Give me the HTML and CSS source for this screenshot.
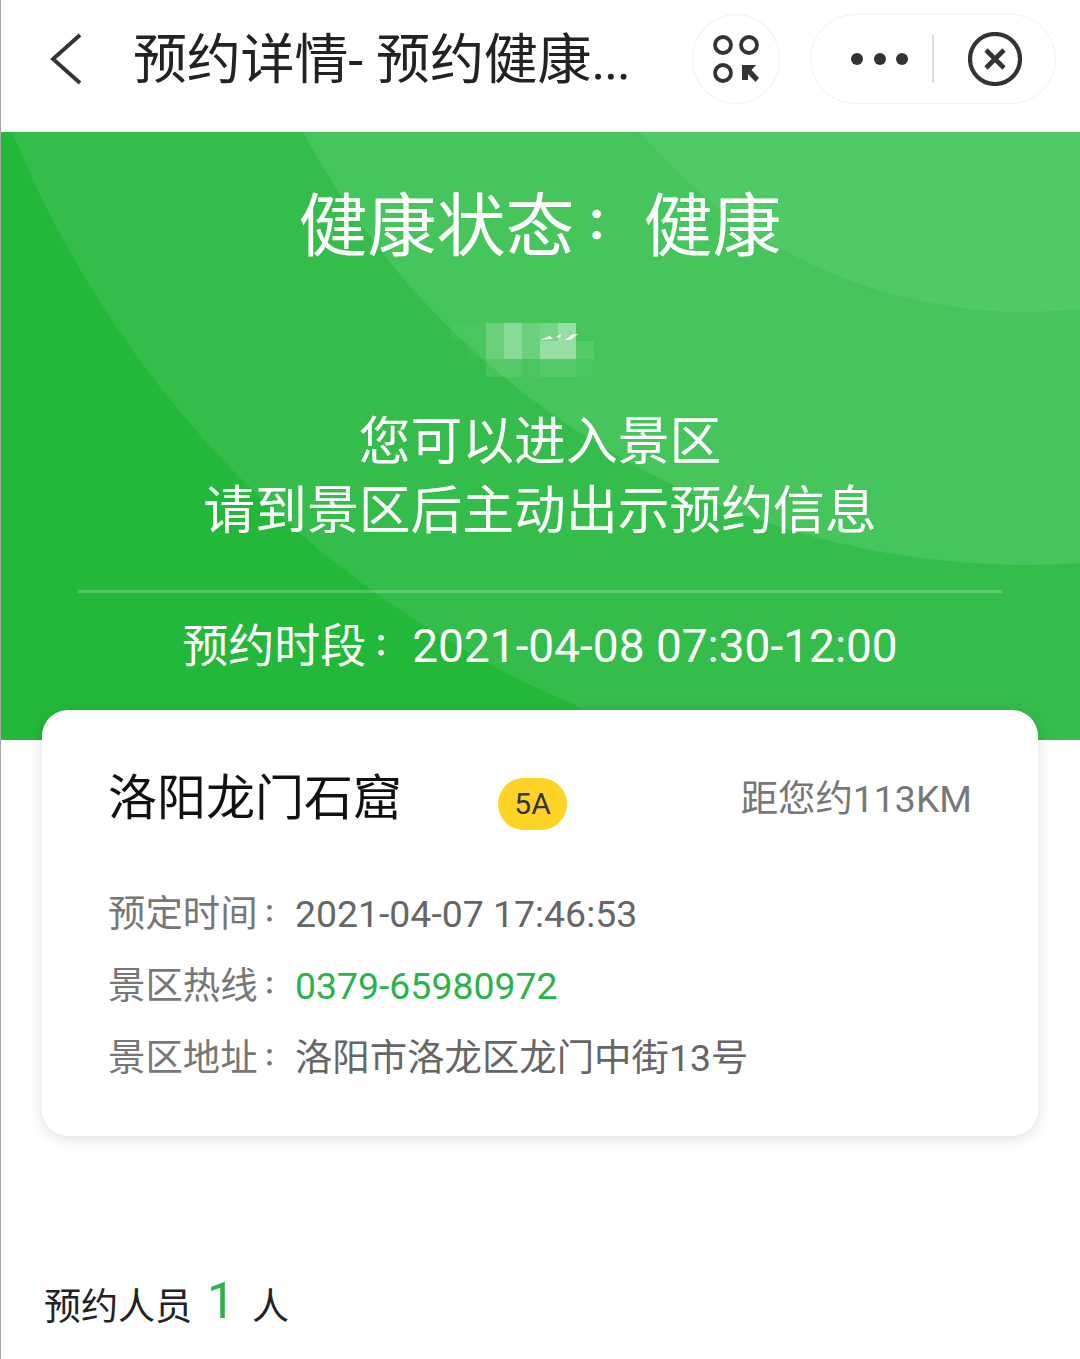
FILE: index.html
```html
<!DOCTYPE html>
<html lang="zh-CN">
<head>
    <meta charset="UTF-8">
    <meta name="viewport" content="width=device-width, initial-scale=1.0">
    <title>预约详情</title>
    <link rel="stylesheet" href="styles.css">
</head>
<body>
    <header class="nav-bar">
        <svg class="back-icon" width="34" height="52" viewBox="0 0 34 52">
            <path d="M32 2 L5 26 L32 50" fill="none" stroke="#333" stroke-width="3.8"/>
        </svg>
        <h1 class="nav-title">预约详情- 预约健康<span class="nav-dots">...</span></h1>
        <div class="scan-button">
            <svg width="48" height="48" viewBox="0 0 48 48">
                <circle cx="11" cy="10" r="8" fill="none" stroke="#333" stroke-width="3.8"/>
                <circle cx="37" cy="10" r="8" fill="none" stroke="#333" stroke-width="3.8"/>
                <circle cx="11" cy="38" r="8" fill="none" stroke="#333" stroke-width="3.8"/>
                <path d="M30 30 H44 L39.5 35 L47 43 L43.5 47 L36 39 V45 H30 Z" fill="#333"/>
            </svg>
        </div>
        <div class="capsule">
            <div class="capsule-dots">
                <span class="dot"></span>
                <span class="dot"></span>
                <span class="dot"></span>
            </div>
            <span class="capsule-line"></span>
            <svg class="close-icon" width="54" height="54" viewBox="0 0 54 54">
                <circle cx="27" cy="27" r="25" fill="none" stroke="#333" stroke-width="4.2"/>
                <path d="M18 18 L36 36 M36 18 L18 36" fill="none" stroke="#333" stroke-width="4.6"/>
            </svg>
        </div>
    </header>

    <section class="banner">
        <div class="banner-shape shape-one"></div>
        <div class="banner-shape shape-two"></div>
        <div class="banner-shape shape-three"></div>
        <div class="banner-content">
            <h2 class="health-status">健康状态<span class="colon" lang="zh-TW">：</span>健康</h2>
            <div class="blur-name">
                <div class="blur-row">
                    <i class="p1"></i><i class="p1"></i><i class="p3"></i><i class="p6"></i><i class="p3"></i><i class="p4"></i><i class="p7"></i><i class="p0"></i>
                </div>
                <div class="blur-row">
                    <i class="p0"></i><i class="p1"></i><i class="p3"></i><i class="p6"></i><i class="p3"></i><i class="p7"></i><i class="p7"></i><i class="p2"></i>
                </div>
                <div class="blur-row">
                    <i class="p0"></i><i class="p0"></i><i class="p2"></i><i class="p2"></i><i class="p1"></i><i class="p2"></i><i class="p2"></i><i class="p1"></i>
                </div>
                <svg class="blur-marks" width="46" height="10" viewBox="0 0 46 10">
                    <path d="M0 9 L10 5 L13 8 Z M16 6 L21 3 L20 7 Z M25 9 L33 3 L38 3 L30 9 Z" fill="#fff"/>
                </svg>
            </div>
            <p class="notice">您可以进入景区<br>请到景区后主动出示预约信息</p>
            <hr class="banner-line">
            <p class="period">预约时段<span class="colon" lang="zh-TW">：</span>2021-04-08 07:30-12:00</p>
        </div>
    </section>

    <section class="card">
        <div class="card-head">
            <h3 class="spot-name">洛阳龙门石窟</h3>
            <span class="level">5A</span>
            <span class="distance">距您约113KM</span>
        </div>
        <div class="info-row"><span class="info-label">预定时间<span class="colon" lang="zh-TW">：</span></span>2021-04-07 17:46:53</div>
        <div class="info-row"><span class="info-label">景区热线<span class="colon" lang="zh-TW">：</span></span><span class="phone">0379-65980972</span></div>
        <div class="info-row"><span class="info-label">景区地址<span class="colon" lang="zh-TW">：</span></span>洛阳市洛龙区龙门中街13号</div>
    </section>

    <div class="people">预约人员<span class="people-count">1</span>人</div>
</body>
</html>
```

FILE: styles.css
```css
* {
    box-sizing: border-box;
}

html, body {
    height: 1359px;
    overflow: hidden;
}

body {
    font-family: 'Roboto', 'Noto Sans CJK SC', sans-serif;
    background-color: #fff;
    margin: 0;
    padding: 0;
    border-left: 1px solid #a8a8a8;
}

/* small mid-height colon, left part of a full-width cell */
.colon {
    font-family: 'Roboto', 'Noto Sans CJK TC', sans-serif;
    font-size: 0.64em;
    font-weight: 700;
    line-height: 1;
    vertical-align: 0.22em;
    margin-right: 0.5625em;
}

.nav-bar {
    height: 132px;
    display: flex;
    align-items: center;
    padding: 0 24px 14px 47px;
    background-color: #fff;
}

.back-icon {
    flex-shrink: 0;
}

.nav-title {
    flex: 1;
    min-width: 0;
    margin: 0 0 0 51px;
    padding-top: 4px;
    font-size: 54px;
    line-height: 60px;
    font-weight: 400;
    letter-spacing: -0.2px;
    color: #222;
    white-space: nowrap;
}

.nav-dots {
    letter-spacing: -1.5px;
}

.scan-button {
    flex-shrink: 0;
    width: 88px;
    height: 90px;
    border: 1px solid #f1f1f1;
    border-radius: 50%;
    display: flex;
    align-items: center;
    justify-content: center;
}

.capsule {
    flex-shrink: 0;
    width: 246px;
    height: 90px;
    margin-left: 30px;
    border: 1px solid #f1f1f1;
    border-radius: 45px;
    display: flex;
    align-items: center;
    padding-left: 40px;
}

.capsule-dots {
    display: flex;
    gap: 10.5px;
}

.dot {
    width: 12px;
    height: 12px;
    border-radius: 50%;
    background-color: #333;
}

.capsule-line {
    width: 2px;
    height: 48px;
    margin-left: 24px;
    background-color: #ddd;
}

.close-icon {
    margin-left: 34px;
}

.banner {
    position: relative;
    height: 608px;
    margin-left: -1px;
    overflow: hidden;
    background-color: #23b83a;
}

.banner-shape {
    position: absolute;
    border-radius: 50%;
}

.shape-one {
    left: -65px;
    top: -1450px;
    width: 2108px;
    height: 2108px;
    background-color: #34bd4b;
}

.shape-two {
    left: 205px;
    top: -1211px;
    width: 1644px;
    height: 1644px;
    background-color: #45c55b;
}

.shape-three {
    left: 523px;
    top: -824px;
    width: 1004px;
    height: 1004px;
    background-color: #50ca67;
}

.banner-content {
    position: relative;
    display: flex;
    flex-direction: column;
    align-items: center;
    padding-top: 54px;
    color: #fff;
}

.health-status {
    margin: 0;
    font-size: 69px;
    line-height: 84px;
    font-weight: 400;
}

.blur-name {
    position: relative;
    width: 144px;
    height: 54px;
    margin: 53px 36px 0 0;
}

.blur-marks {
    position: absolute;
    left: 90px;
    top: 8px;
}

.blur-row {
    display: flex;
    height: 18px;
}

.blur-row i {
    display: block;
    width: 18px;
    height: 18px;
}

.p0 { background-color: transparent; }
.p1 { background-color: rgba(255, 255, 255, 0.03); }
.p2 { background-color: rgba(255, 255, 255, 0.09); }
.p3 { background-color: rgba(255, 255, 255, 0.2); }
.p4 { background-color: rgba(255, 255, 255, 0.26); }
.p6 { background-color: rgba(255, 255, 255, 0.36); }
.p7 { background-color: rgba(255, 255, 255, 0.44); }

.notice {
    margin: 31px 0 0;
    font-size: 51.8px;
    line-height: 69px;
    text-align: center;
}

.banner-line {
    width: 924px;
    height: 3px;
    margin: 44px 0 0;
    border: 0;
    background-color: rgba(255, 255, 255, 0.2);
}

.period {
    margin: 25px 0 0;
    font-size: 46px;
    line-height: 56px;
}

.card {
    position: relative;
    width: 996px;
    height: 426px;
    margin: -30px 0 0 41px;
    padding: 54px 66px 0;
    background-color: #fff;
    border-radius: 26px;
    box-shadow: 0 3px 14px rgba(0, 0, 0, 0.13);
}

.card-head {
    display: flex;
    align-items: center;
    height: 70px;
    margin-bottom: 44px;
}

.spot-name {
    width: 390px;
    margin: 0;
    font-size: 49px;
    line-height: 70px;
    font-weight: 400;
    color: #111;
}

.level {
    width: 69px;
    height: 52px;
    margin-top: 10px;
    border-radius: 26px;
    background-color: #fdd426;
    color: #333;
    font-size: 30px;
    line-height: 52px;
    text-align: center;
}

.distance {
    margin: 0 0 6px auto;
    font-size: 37.4px;
    color: #777;
}

.info-row {
    height: 72px;
    font-size: 37.4px;
    line-height: 72px;
    color: #666;
}

.info-label {
    color: #777;
}

.phone {
    color: #2bb24c;
}

.people {
    margin: 137px 0 0 43px;
    display: flex;
    align-items: flex-end;
    font-size: 37px;
    line-height: 50px;
    color: #222;
}

.people-count {
    margin: 0 17px 4px 15px;
    font-size: 50px;
    line-height: 56px;
    color: #2bb24c;
}
```
